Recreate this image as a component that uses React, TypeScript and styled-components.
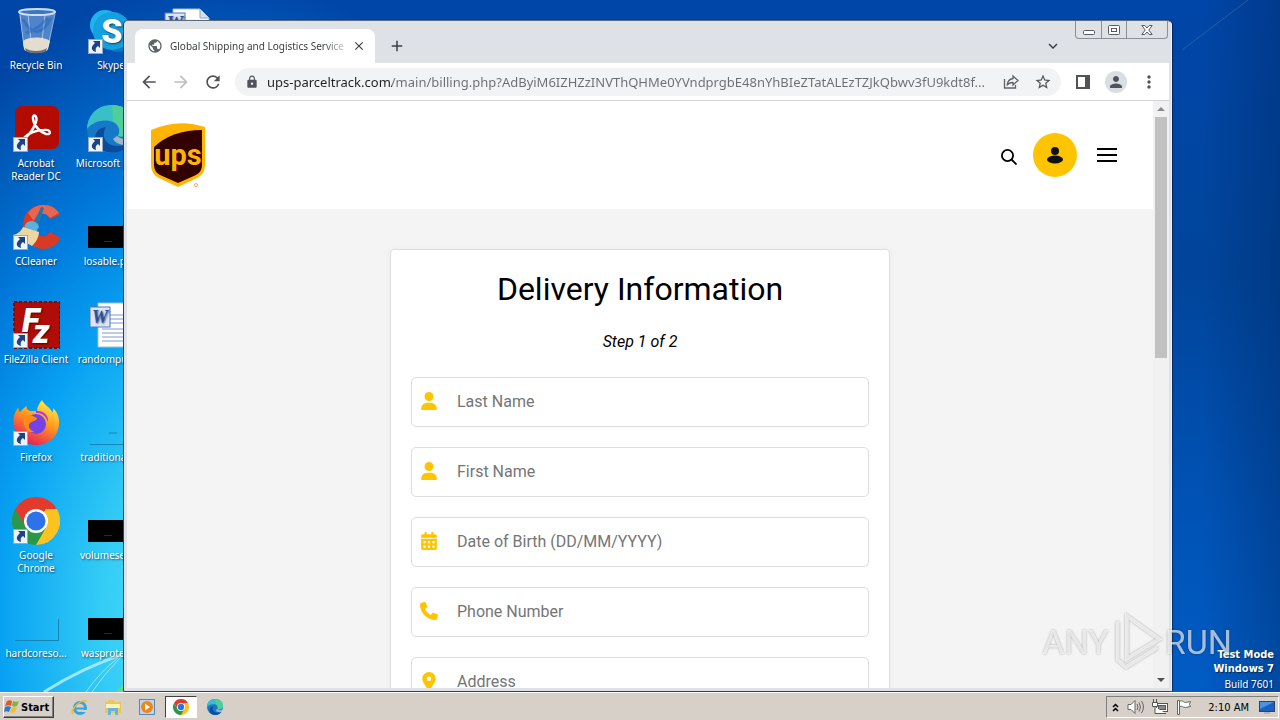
import { useState } from "react";
import type { ReactNode } from "react";
import styled, { createGlobalStyle, css } from "styled-components";
import {
  MdAdd,
  MdArrowBack,
  MdArrowForward,
  MdClose,
  MdExpandMore,
  MdLock,
  MdMoreVert,
  MdPerson,
  MdPublic,
  MdRefresh,
  MdStarBorder,
} from "react-icons/md";
import { FaCalendarDays, FaLocationDot, FaPhone, FaUser } from "react-icons/fa6";

const uiFont = `"Noto Sans", "DejaVu Sans Condensed", sans-serif`;
const boldFont = `"DejaVu Sans Condensed", "DejaVu Sans", sans-serif`;
const pageFont = `Roboto, "Liberation Sans", sans-serif`;

const GlobalStyle = createGlobalStyle`
  * { box-sizing: border-box; }
  body { margin: 0; overflow: hidden; font-family: ${uiFont}; font-size: 10px; }
  button, input { font: inherit; }
  button { padding: 0; border: 0; background: none; color: inherit; }
  svg { display: block; flex: none; }
`;

const Screen = styled.div`
  height: 100vh;
  display: flex;
  flex-direction: column;
`;

const Desktop = styled.main`
  position: relative;
  flex: 1;
  min-height: 0;
  overflow: hidden;
  background:
    radial-gradient(
      ellipse 420px 640px at 220px 620px,
      #62e6f4 0%,
      #34cdf6 28%,
      #08a2f3 52%,
      #0078da 72%,
      transparent 100%
    ),
    linear-gradient(90deg, transparent 94%, rgba(0, 30, 80, 0.3) 100%),
    linear-gradient(180deg, #0046a8 0%, #00459b 40%, #0053b6 75%, #005cc4 100%);
`;

const Rays = styled.svg`
  position: absolute;
  left: 0;
  bottom: 0;
  width: 124px;
  height: 48px;
`;

const CornerRay = styled.svg`
  position: absolute;
  right: 0;
  top: 0;
  width: 108px;
  height: 80px;
`;

const IconGrid = styled.div`
  display: grid;
  grid-auto-flow: column;
  grid-template-rows: repeat(7, 98px);
  grid-auto-columns: 72px;
  column-gap: 3px;
  padding-top: 7px;
  height: 100%;
`;

const Shortcut = styled.button`
  position: relative;
  display: flex;
  flex-direction: column;
  align-items: center;
  gap: 4px;
  color: #fff;
  line-height: 13px;
  text-shadow: 1px 1px 2px rgba(0, 0, 0, 0.6);
  white-space: nowrap;
`;

const ShortcutLabel = styled.span`
  white-space: pre;
`;

const Arrow = styled.svg`
  position: absolute;
  left: 13px;
  top: 32px;
`;

const BrowserWindow = styled.section`
  position: absolute;
  left: 123px;
  right: 108px;
  top: 20px;
  bottom: 0;
  display: flex;
  flex-direction: column;
  padding: 0 2px 3px 3px;
  border: 1px solid #33404f;
  border-top-color: #5b6b80;
  border-right-color: #eef2f6;
  border-radius: 5px 5px 2px 2px;
  background: #dee1e6;
  box-shadow: 1px 0 1px rgba(0, 20, 60, 0.6);
`;

const TitleBar = styled.div`
  display: flex;
  align-items: flex-end;
  height: 42px;
  padding-left: 8px;
  color: #3c4043;
`;

const Tab = styled.div`
  display: flex;
  align-items: center;
  gap: 7px;
  width: 240px;
  height: 34px;
  padding: 0 8px 0 12px;
  border-radius: 8px 8px 0 0;
  background: #fff;
  color: #5f6368;
`;

const TabTitle = styled.span`
  flex: 1;
  overflow: hidden;
  white-space: nowrap;
  color: #3c4043;
  mask-image: linear-gradient(90deg, #000 88%, transparent 104%);
`;

const TabAction = styled.button`
  display: grid;
  place-items: center;
  width: 16px;
  height: 34px;
  color: #3c4043;
`;

const NewTab = styled(TabAction)`
  width: 28px;
  margin-left: 8px;
  margin-right: auto;
`;

const TabSearch = styled(TabAction)`
  width: 24px;
  margin-right: 10px;
`;

const WindowButtons = styled.div`
  display: flex;
  align-self: flex-start;
  height: 18px;
  margin-right: 1px;
  border: 1px solid #8b8f97;
  border-top: 0;
  border-radius: 0 0 4px 4px;
`;

const WindowButton = styled.button<{ $width: number }>`
  display: grid;
  place-items: center;
  width: ${(p) => p.$width}px;
  & + & {
    border-left: 1px solid #8b8f97;
  }
`;

const Toolbar = styled.div`
  display: flex;
  align-items: center;
  height: 38px;
  padding: 0 10px 0 12px;
  gap: 12px;
  border-bottom: 1px solid #d0d3d7;
  background: #fff;
  color: #505357;
`;

const ToolButton = styled.button<{ $faded?: boolean }>`
  display: grid;
  place-items: center;
  width: 20px;
  height: 20px;
  ${(p) => p.$faded && css`color: #bdbfc1;`}
`;

const Omnibox = styled.div`
  display: flex;
  align-items: center;
  gap: 8px;
  flex: 1;
  min-width: 0;
  height: 28px;
  padding: 0 8px 0 10px;
  border-radius: 14px;
  background: #f1f3f4;
`;

const OmniboxActions = styled.div`
  display: flex;
  gap: 12px;
`;

const UrlInput = styled.input`
  flex: 1;
  min-width: 0;
  padding: 0;
  border: 0;
  outline: 0;
  font-size: 13px;
  text-overflow: ellipsis;
  color: transparent;
  background: linear-gradient(90deg, #202124 125px, #6a6e73 125px);
  background-clip: text;
`;

const Avatar = styled.button`
  display: grid;
  place-items: center;
  width: 22px;
  height: 22px;
  border-radius: 50%;
  background: #dadde3;
`;

const Viewport = styled.div`
  display: flex;
  flex: 1;
  min-height: 0;
`;

const Page = styled.div`
  flex: 1;
  overflow: hidden;
  background: #f4f4f4;
  font-family: ${pageFont};
`;

const SiteHeader = styled.header`
  display: flex;
  align-items: center;
  justify-content: space-between;
  height: 108px;
  padding: 0 36px 0 23px;
  background: #fff;
`;

const SiteNav = styled.nav`
  display: flex;
  align-items: center;
  gap: 16px;
`;

const NavButton = styled.button`
  display: grid;
  place-items: center;
  color: #000;
`;

const AccountButton = styled(NavButton)`
  width: 44px;
  height: 44px;
  margin-right: 4px;
  border-radius: 50%;
  background: #ffc400;
`;

const Card = styled.form`
  display: flex;
  flex-direction: column;
  width: 500px;
  max-width: 100%;
  margin: 40px auto;
  padding: 20px;
  border: 1px solid #dedede;
  border-radius: 4px;
  background: #fff;
  box-shadow: 0 0 6px rgba(0, 0, 0, 0.04);
`;

const CardTitle = styled.h1`
  margin: 0;
  font-size: 32px;
  font-weight: 400;
  line-height: 38px;
  text-align: center;
`;

const Step = styled.p`
  margin: 23px 0 24px;
  font-size: 16px;
  font-style: italic;
  line-height: 22px;
  text-align: center;
`;

const Field = styled.label`
  display: flex;
  align-items: center;
  height: 50px;
  margin-bottom: 20px;
  padding: 0 8px 2px;
  border: 1px solid #dcdcdc;
  border-radius: 5px;
  color: #ffc400;
`;

const FieldIcon = styled.span`
  width: 37px;
`;

const FieldInput = styled.input`
  flex: 1;
  min-width: 0;
  border: 0;
  padding: 0;
  outline: 0;
  font-size: 16px;
  &::placeholder {
    color: #757575;
    opacity: 1;
  }
`;

const ScrollTrack = styled.div`
  display: flex;
  flex-direction: column;
  align-items: center;
  width: 16px;
  background: #f1f1f1;
`;

const ScrollArrow = styled.button`
  display: grid;
  place-items: center;
  width: 16px;
  height: 16px;
`;

const ScrollThumb = styled.div`
  width: 12px;
  height: 41%;
  margin-bottom: auto;
  background: #c1c1c1;
`;

const BuildInfo = styled.div`
  position: absolute;
  right: 6px;
  bottom: 0;
  color: #fff;
  font-size: 11px;
  line-height: 14px;
  text-align: right;
  text-shadow: 1px 1px 1px rgba(0, 0, 0, 0.5);
  p {
    margin: 0;
    font-size: 10px;
    line-height: 16px;
  }
  strong {
    display: block;
    font-family: ${boldFont};
  }
`;

const Watermark = styled.div`
  position: absolute;
  right: 48px;
  bottom: 19px;
  display: flex;
  align-items: center;
  gap: 2px;
  color: rgba(255, 255, 255, 0.65);
  font-family: Roboto, sans-serif;
  font-size: 34px;
  filter: drop-shadow(0 0 1px rgba(0, 0, 0, 0.45));
  pointer-events: none;
`;

const Taskbar = styled.footer`
  display: flex;
  align-items: center;
  height: 28px;
  padding: 2px 1px 1px 3px;
  border-top: 1px solid #fff;
  background: #d6d0c8;
`;

const StartButton = styled.button`
  display: flex;
  align-items: center;
  gap: 1px;
  width: 51px;
  height: 22px;
  margin-right: 9px;
  border: 1px solid;
  border-color: #fff #404040 #404040 #fff;
  box-shadow: inset -1px -1px #808080;
  font-family: ${boldFont};
  font-size: 11px;
  font-weight: 700;
`;

const TaskButton = styled.button<{ $active?: boolean }>`
  display: grid;
  place-items: center;
  width: 32px;
  height: 22px;
  margin-right: 2px;
  ${(p) =>
    p.$active &&
    css`
      border: 1px solid;
      border-color: #404040 #fff #fff #404040;
      background: #fff;
    `}
`;

const Tray = styled.div`
  display: flex;
  align-items: center;
  gap: 8px;
  height: 22px;
  margin-left: auto;
  padding: 0 3px 0 5px;
  border: 1px solid;
  border-color: #808080 #fff #fff #808080;
`;

const Clock = styled.time`
  margin: 0 2px 0 8px;
  font-family: ${boldFont};
  font-size: 11px;
`;

function ShortcutArrow() {
  return (
    <Arrow width="15" height="15" viewBox="0 0 15 15">
      <rect x=".5" y=".5" width="14" height="14" fill="#eef3fa" stroke="#9aa7b8" />
      <path d="M5 2h7v7l-2-2c-2 1-3 3-2 6C4 12 2 9 6 5l1-1z" fill="#1c4385" />
    </Arrow>
  );
}

function RecycleBin() {
  return (
    <svg width="48" height="48" viewBox="0 0 48 48">
      <path d="M7 5l5 36c1 6 23 6 24 0l7-36z" fill="#8fb7e8" opacity=".55" />
      <path d="M11 34l1 8c2 5 22 5 24 0l2-8c-5-4-20-5-27 0z" fill="#e4dccd" />
      <path d="M13 41c5 4 17 4 22 0l-1 3c-4 3-16 3-20 0z" fill="#6f7071" />
      <path d="M8 8l4 32M43 7l-7 33M16 8l3 26M33 8l-3 26" stroke="#dcecff" opacity=".6" />
      <path d="M11 12c8 16 18 18 28-1M14 26c10-3 15-8 22-15" stroke="#2360b5" strokeWidth="3" opacity=".45" fill="none" />
      <ellipse cx="25" cy="5" rx="18" ry="3" fill="#3d76c0" stroke="#cfdded" strokeWidth="2" />
    </svg>
  );
}

function Skype() {
  return (
    <svg width="48" height="48" viewBox="0 0 48 48">
      <circle cx="18" cy="18" r="15" fill="#1fb4ec" />
      <circle cx="31" cy="31" r="14" fill="#0877c4" />
      <circle cx="25" cy="24" r="19" fill="#15a0e0" />
      <text x="25" y="36" fontFamily="Roboto" fontWeight="900" fontSize="34" fill="#fff" textAnchor="middle">
        S
      </text>
    </svg>
  );
}

function Acrobat() {
  return (
    <svg width="48" height="48" viewBox="0 0 48 48">
      <rect x="3" y="1" width="44" height="43" rx="7" fill="#b30b00" />
      <path
        d="M12 33c5-2 10-10 12-16 2-7-4-9-3-3 1 7 7 13 13 15 6 1 5-5-2-4-7 0-16 3-20 8-1 1-2 1 0 0z"
        fill="none"
        stroke="#fff"
        strokeWidth="2.4"
      />
    </svg>
  );
}

function Edge({ size = 48 }: { size?: number }) {
  return (
    <svg width={size} height={size} viewBox="0 0 48 48">
      <circle cx="24" cy="24" r="24" fill="#1679c8" />
      <path d="M0 24C1 8 12 0 25 0c14 0 23 9 23 20 0 9-8 13-17 11 3-5 1-13-8-15C12 14 4 19 0 24z" fill="#39bfc8" />
      <path d="M25 0c14 0 23 9 23 20 0 9-8 13-17 11 4-8-1-12-5-15z" fill="#59d67e" opacity=".65" />
      <path d="M19 22c-7 12 3 25 25 16-6 9-20 13-31 6-9-7-6-21 6-22z" fill="#0c4b9c" />
      <path d="M30 31c5 4 12 4 18-1-1 4-3 7-5 9-7 2-14 0-17-5z" fill="#d6d0c8" opacity=".7" />
    </svg>
  );
}

function CCleaner() {
  return (
    <svg width="48" height="48" viewBox="0 0 48 48">
      <path d="M48 12C41-1 20-2 13 13c-7 17 4 33 18 33 8 0 14-4 18-11l-11-6c-4 6-11 5-14 0-4-8-1-18 6-19 4 0 6 2 8 6z" fill="#d93a25" />
      <path d="M16 10C24-1 40-1 47 10l-9 5c-5-7-13-5-16 3z" fill="#f17861" opacity=".7" />
      <path d="M29 4l3 1-6 18-5-2z" fill="#2875a9" />
      <path d="M13 22c3-6 12-5 14 2l-3 5-12-3z" fill="#5bb0de" />
      <path d="M11 24l16 5c0 5-3 10-7 14L1 32c5-1 8-4 10-8z" fill="#efd6a0" />
    </svg>
  );
}

function FileZilla() {
  return (
    <svg width="48" height="48" viewBox="0 0 48 48">
      <rect x="2" y="1" width="46" height="46" fill="#b00c08" stroke="#7c0704" strokeWidth="2" strokeDasharray="3 2" />
      <text x="10" y="31" fontFamily="Roboto" fontWeight="900" fontStyle="italic" fontSize="33" fill="#fff">
        F
        <tspan x="21" y="42">
          z
        </tspan>
      </text>
    </svg>
  );
}

function Firefox() {
  return (
    <svg width="48" height="48" viewBox="0 0 48 48">
      <defs>
        <linearGradient id="fox" x1=".8" y1="0" x2=".3" y2="1">
          <stop offset="0" stopColor="#fff44f" />
          <stop offset=".45" stopColor="#ff9a1f" />
          <stop offset="1" stopColor="#e9155c" />
        </linearGradient>
      </defs>
      <path d="M30 1c-3 4-5 7-5 11l-7 0c-3-1-4-3-3-5-4 2-6 5-7 6-2-2-2-4-1-5C1 14 1 22 2 28c3 12 13 19 24 18 14-1 22-12 21-25-1-6-3-9-6-12v5c-3-6-9-8-11-13z" fill="url(#fox)" />
      <circle cx="24" cy="25" r="10" fill="#7542e5" />
      <path d="M12 17c4-3 9 0 13 2 0 3-5 3-7 5-3 3 0 8 5 9-8 2-13-5-11-16z" fill="#ff8a16" />
      <path d="M24 14c7-1 11 5 12 9 1-6-4-12-12-11z" fill="#b833e1" />
    </svg>
  );
}

function Chrome({ size = 48 }: { size?: number }) {
  return (
    <svg width={size} height={size} viewBox="0 0 48 48">
      <path d="M24 24L3.2 12A24 24 0 0 1 44.8 12z" fill="#e23b2e" />
      <path d="M24 24V12h20.8A24 24 0 0 1 24 48z" fill="#fcc31e" />
      <path d="M3.2 12A24 24 0 0 0 24 48l10.4-18L24 24 13.6 30z" fill="#299848" />
      <path d="M3.2 12h30.8L24 24 13.6 30z" fill="#e23b2e" />
      <circle cx="24" cy="24" r="12" fill="#fff" />
      <circle cx="24" cy="24" r="9.5" fill="#2d72e8" />
    </svg>
  );
}

function WordDoc() {
  return (
    <svg width="48" height="48" viewBox="0 0 48 48">
      <path d="M11 2h27l9 9v35H11z" fill="#fff" stroke="#a7bbd3" />
      <path d="M38 2v9h9" fill="#d5e0ee" stroke="#91a6c0" />
      <path d="M23 14h20M23 18h20M23 22h20M15 28h28M15 32h28M15 36h28M15 40h28" stroke="#7a97d1" />
      <rect x="3" y="6" width="20" height="20" fill="#dbe6f8" stroke="#5377b8" />
      <text x="13" y="22" fontFamily="Liberation Serif" fontWeight="700" fontStyle="italic" fontSize="18" fill="#2850a4" textAnchor="middle">
        W
      </text>
    </svg>
  );
}

function DarkThumb() {
  return (
    <svg width="48" height="48" viewBox="0 0 48 48">
      <rect x="1" y="23" width="47" height="22" fill="#000" />
      <path d="M17 38.500h8" stroke="#17304c" />
    </svg>
  );
}

function ClearThumb({ side }: { side?: boolean }) {
  return (
    <svg width="48" height="48" viewBox="0 0 48 48">
      <path d={side ? "M3 45.500H46.500V24" : "M3 45.500H48M22 34h8"} fill="none" stroke="#1684b5" />
    </svg>
  );
}

function UpsShield() {
  return (
    <svg width="56" height="66" viewBox="0 0 56 66" role="img" aria-label="UPS">
      <path d="M1 8Q28-4 55 5v38q0 9-8 13L28 65 9 56Q1 52 1 43z" fill="#ffb500" />
      <path d="M4 25Q22 8 52 8v35q0 7-6 10L28 61 10 53q-6-3-6-10z" fill="#330000" />
      <text x="28" y="43" fontFamily="Roboto" fontWeight="700" fontSize="29" fill="#ffb500" textAnchor="middle">
        ups
      </text>
      <circle cx="46" cy="63" r="1.500" fill="none" stroke="#e5b34b" />
    </svg>
  );
}

function ShareIcon() {
  return (
    <svg width="16" height="16" viewBox="0 0 16 16" fill="none" stroke="#5f6368" strokeWidth="1.300">
      <path d="M1.500 5v9h11v-3" />
      <path d="M10 2l5 4.500L10 11V8.500c-3 0-4.500.5-6 3C4.500 7 6.500 5 10 4.500z" />
    </svg>
  );
}

function WindowsFlag() {
  return (
    <svg width="16" height="16" viewBox="0 0 16 16">
      <path d="M3 2c2-1 3-1 5 0L7 7C5 6 4 6 1 7z" fill="#e5532b" />
      <path d="M9 2c2 1 4 1 6 0l-2 5c-2 1-3 1-5 0z" fill="#7fb53a" />
      <path d="M1 8c2-1 4-1 6 0l-2 5c-2-1-3-1-5 0z" fill="#2c78cf" />
      <path d="M8 8c2 1 3 1 5 0l-2 5c-2 1-3 1-5 0z" fill="#f5bd29" />
    </svg>
  );
}

function ExplorerE() {
  return (
    <svg width="17" height="17" viewBox="0 0 17 17" fill="none">
      <circle cx="9" cy="9" r="5.500" stroke="#35a4e0" strokeWidth="3" />
      <path d="M5 9.500h10" stroke="#35a4e0" strokeWidth="2" />
      <path d="M11 12h5" stroke="#d6d0c8" strokeWidth="2" />
      <path d="M2 15C-1 11 9 0 16 2" stroke="#edbb32" strokeWidth="1.500" />
    </svg>
  );
}

function Folder() {
  return (
    <svg width="16" height="16" viewBox="0 0 16 16">
      <path d="M0 3h3V1h6l1 2h6v11H0z" fill="#e9c75f" />
      <path d="M1 5h14v4H1z" fill="#fff3b5" />
      <path d="M3 16V9h10v7h-3v-4H6v4z" fill="#63b5dd" />
    </svg>
  );
}

function MediaPlayer() {
  return (
    <svg width="16" height="16" viewBox="0 0 16 16">
      <rect x=".5" y=".5" width="15" height="15" fill="#b9d6ef" stroke="#5a89b5" />
      <circle cx="8" cy="8" r="6" fill="#f38313" />
      <path d="M6 4.500l5 3.500-5 3.500z" fill="#fff" />
    </svg>
  );
}

function VolumeIcon() {
  return (
    <svg width="17" height="16" viewBox="0 0 17 16" stroke="#666" fill="none">
      <path d="M1 5.500h3l4-4v13l-4-4H1z" fill="#fff" />
      <path d="M10 5q2 3 0 6M12 3.500q3 4.500 0 9M14.500 2q4 6 0 12" />
    </svg>
  );
}

function NetworkIcon() {
  return (
    <svg width="16" height="16" viewBox="0 0 16 16" stroke="#555" fill="#fff">
      <rect x="4.500" y="4.500" width="11" height="8" />
      <rect x="6.500" y="6.500" width="7" height="4" fill="#888" />
      <path d="M.5 3.500h5v4h-5zM1.500 0v3M4.500 0v3M3 8v6.500h11" />
    </svg>
  );
}

function FlagIcon() {
  return (
    <svg width="16" height="16" viewBox="0 0 16 16" stroke="#666" fill="#fff">
      <path d="M1.500 1.500h2v14h-2zM3.500 2.500c3-2 4 1 6 1l5-1-1 3 1 2-5 1c-3 0-3-2-6-1z" />
    </svg>
  );
}

interface DesktopItem {
  label: string;
  icon: ReactNode;
  linked?: boolean;
}

const desktopItems: DesktopItem[] = [
  { label: "Recycle Bin", icon: <RecycleBin /> },
  { label: "Acrobat\nReader DC", icon: <Acrobat />, linked: true },
  { label: "CCleaner", icon: <CCleaner />, linked: true },
  { label: "FileZilla Client", icon: <FileZilla />, linked: true },
  { label: "Firefox", icon: <Firefox />, linked: true },
  { label: "Google\nChrome", icon: <Chrome />, linked: true },
  { label: "hardcoreso...", icon: <ClearThumb side /> },
  { label: "Skype", icon: <Skype />, linked: true },
  { label: "Microsoft Edge", icon: <Edge />, linked: true },
  { label: "losable.png", icon: <DarkThumb /> },
  { label: "randompubl...", icon: <WordDoc /> },
  { label: "traditionals...", icon: <ClearThumb /> },
  { label: "volumeserv...", icon: <DarkThumb /> },
  { label: "wasprotect...", icon: <DarkThumb /> },
  { label: "", icon: <WordDoc /> },
];

const fields = [
  { name: "lastName", label: "Last Name", icon: <FaUser size={18} /> },
  { name: "firstName", label: "First Name", icon: <FaUser size={18} /> },
  { name: "birth", label: "Date of Birth (DD/MM/YYYY)", icon: <FaCalendarDays size={18} /> },
  { name: "phone", label: "Phone Number", icon: <FaPhone size={18} /> },
  { name: "address", label: "Address", icon: <FaLocationDot size={18} /> },
];

export default function App() {
  const [url, setUrl] = useState(
    "ups-parceltrack.com/main/billing.php?AdByiM6IZHZzINVThQHMe0YVndprgbE48nYhBIeZTatALEzTZJkQbwv3fU9kdt8f..."
  );

  return (
    <Screen>
      <GlobalStyle />
      <Desktop>
        <Rays viewBox="0 0 124 48" fill="none">
          <path d="M44 48Q82 24 124 10" stroke="#b9f3ff" strokeWidth="3" opacity=".8" />
          <path d="M86 48Q100 28 118 14M92 48Q104 30 122 12" stroke="#8fe8fb" />
          <path d="M116 48l8-9v9z" fill="#5fdc8a" />
        </Rays>
        <CornerRay viewBox="0 0 108 80">
          <path d="M10 50L76 0" stroke="#3c79b5" opacity=".5" />
        </CornerRay>
        <IconGrid>
          {desktopItems.map((item, idx) => (
            <Shortcut key={idx} aria-label={item.label || "Document"}>
              {item.icon}
              {item.linked && <ShortcutArrow />}
              <ShortcutLabel>{item.label}</ShortcutLabel>
            </Shortcut>
          ))}
        </IconGrid>
        <BuildInfo>
          <strong>Test Mode</strong>
          <strong>Windows 7</strong>
          <p>Build 7601</p>
        </BuildInfo>

        <BrowserWindow>
          <TitleBar>
            <Tab>
              <MdPublic size={16} />
              <TabTitle>Global Shipping and Logistics Services</TabTitle>
              <TabAction aria-label="Close tab">
                <MdClose size={14} />
              </TabAction>
            </Tab>
            <NewTab aria-label="New tab">
              <MdAdd size={18} />
            </NewTab>
            <TabSearch aria-label="Search tabs">
              <MdExpandMore size={18} />
            </TabSearch>
            <WindowButtons>
              <WindowButton $width={25} aria-label="Minimize">
                <svg width="12" height="12" viewBox="0 0 12 12">
                  <rect x=".5" y="6.500" width="11" height="4" rx="1" fill="#fff" stroke="#555a63" />
                </svg>
              </WindowButton>
              <WindowButton $width={25} aria-label="Restore">
                <svg width="12" height="12" viewBox="0 0 12 12" fill="#fff" stroke="#555a63">
                  <rect x=".5" y="1.500" width="11" height="9" rx="1" />
                  <rect x="3.500" y="4.500" width="5" height="3" />
                </svg>
              </WindowButton>
              <WindowButton $width={41} aria-label="Close">
                <svg width="12" height="12" viewBox="0 0 12 12">
                  <path d="M.8 1.500h3L6 4l2.200-2.500h3L7.800 6l3.400 4.500h-3L6 8l-2.200 2.500h-3L4.200 6z" fill="#fff" stroke="#555a63" />
                </svg>
              </WindowButton>
            </WindowButtons>
          </TitleBar>

          <Toolbar>
            <ToolButton aria-label="Back">
              <MdArrowBack size={20} />
            </ToolButton>
            <ToolButton $faded aria-label="Forward">
              <MdArrowForward size={20} />
            </ToolButton>
            <ToolButton aria-label="Reload">
              <MdRefresh size={20} />
            </ToolButton>
            <Omnibox>
              <MdLock size={14} />
              <UrlInput aria-label="Address bar" value={url} onChange={(e) => setUrl(e.target.value)} />
              <OmniboxActions>
                <ToolButton aria-label="Share">
                  <ShareIcon />
                </ToolButton>
                <ToolButton aria-label="Bookmark">
                  <MdStarBorder size={18} />
                </ToolButton>
              </OmniboxActions>
            </Omnibox>
            <ToolButton aria-label="Side panel">
              <svg width="14" height="14" viewBox="0 0 14 14">
                <path d="M1 1h12v12H1z" fill="none" stroke="#505357" strokeWidth="2" />
                <path d="M9 1h4v12H9z" fill="#505357" />
              </svg>
            </ToolButton>
            <Avatar aria-label="Profile">
              <MdPerson size={18} />
            </Avatar>
            <ToolButton aria-label="Menu">
              <MdMoreVert size={20} />
            </ToolButton>
          </Toolbar>

          <Viewport>
            <Page>
              <SiteHeader>
                <UpsShield />
                <SiteNav>
                  <NavButton aria-label="Search">
                    <svg width="16" height="20" viewBox="0 0 16 20" fill="none" stroke="#000" strokeWidth="1.800">
                      <circle cx="6.500" cy="10.500" r="5.600" />
                      <path d="M10.500 14.500L15.500 19.500" />
                    </svg>
                  </NavButton>
                  <AccountButton aria-label="Account">
                    <svg width="16" height="18" viewBox="0 0 16 18" fill="#111">
                      <circle cx="8" cy="5" r="4" />
                      <ellipse cx="8" cy="13.500" rx="8" ry="4" />
                    </svg>
                  </AccountButton>
                  <NavButton aria-label="Menu">
                    <svg width="20" height="14" viewBox="0 0 20 14">
                      <path d="M0 1h20M0 7h20M0 13h20" stroke="#000" strokeWidth="2" />
                    </svg>
                  </NavButton>
                </SiteNav>
              </SiteHeader>

              <Card onSubmit={(e) => e.preventDefault()}>
                <CardTitle>Delivery Information</CardTitle>
                <Step>Step 1 of 2</Step>
                {fields.map((field) => (
                  <Field key={field.name}>
                    <FieldIcon>{field.icon}</FieldIcon>
                    <FieldInput name={field.name} placeholder={field.label} aria-label={field.label} />
                  </Field>
                ))}
              </Card>
            </Page>
            <ScrollTrack>
              <ScrollArrow aria-label="Scroll up">
                <svg width="8" height="4" viewBox="0 0 8 4">
                  <path d="M0 4l4-4 4 4z" fill="#8b8b8b" />
                </svg>
              </ScrollArrow>
              <ScrollThumb />
              <ScrollArrow aria-label="Scroll down">
                <svg width="8" height="4" viewBox="0 0 8 4">
                  <path d="M0 0h8L4 4z" fill="#505050" />
                </svg>
              </ScrollArrow>
            </ScrollTrack>
          </Viewport>
        </BrowserWindow>

        <Watermark>
          <span>ANY</span>
          <svg width="52" height="62" viewBox="0 0 56 62" fill="none" stroke="#fff" strokeOpacity=".7" strokeWidth="4">
            <path d="M17 3L52 28 17 49z" />
            <path d="M7 9v41l9 8 34-21" />
          </svg>
          <span>RUN</span>
        </Watermark>
      </Desktop>

      <Taskbar>
        <StartButton>
          <WindowsFlag />
          Start
        </StartButton>
        <TaskButton aria-label="Internet Explorer">
          <ExplorerE />
        </TaskButton>
        <TaskButton aria-label="Windows Explorer">
          <Folder />
        </TaskButton>
        <TaskButton aria-label="Media Player">
          <MediaPlayer />
        </TaskButton>
        <TaskButton $active aria-label="Google Chrome">
          <Chrome size={16} />
        </TaskButton>
        <TaskButton aria-label="Microsoft Edge">
          <Edge size={16} />
        </TaskButton>
        <Tray>
          <svg width="7" height="9" viewBox="0 0 7 9" fill="none" stroke="#000" strokeWidth="1.500">
            <path d="M1 4l2.500-2.500L6 4M1 8l2.500-2.500L6 8" />
          </svg>
          <VolumeIcon />
          <NetworkIcon />
          <FlagIcon />
          <Clock>2:10 AM</Clock>
          <svg width="16" height="14" viewBox="0 0 16 14">
            <rect x=".5" y="1.500" width="15" height="10" fill="#1c5fc0" stroke="#27466f" />
            <path d="M1 2h14L1 9z" fill="#4d92e0" />
            <path d="M5 13h6" stroke="#999" />
          </svg>
        </Tray>
      </Taskbar>
    </Screen>
  );
}
